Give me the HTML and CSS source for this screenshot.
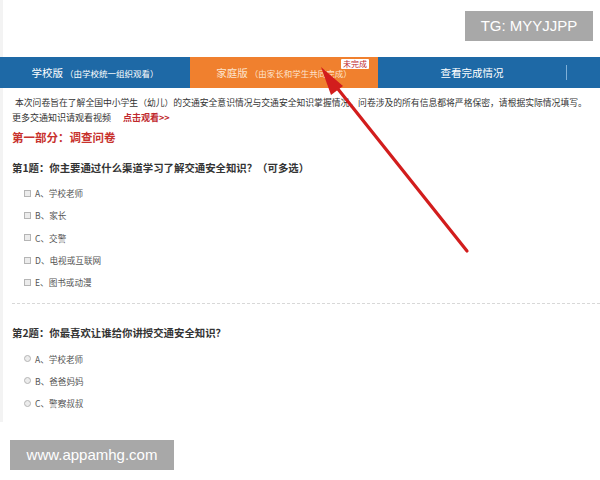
FILE: index.html
```html
<!DOCTYPE html>
<html lang="zh-CN">
<head>
    <meta charset="UTF-8">
    <meta name="viewport" content="width=device-width, initial-scale=1.0">
    <title>交通安全调查问卷</title>
    <link rel="stylesheet" href="styles.css">
</head>
<body>
    <div class="tg-mark">TG: MYYJJPP</div>

    <div class="page">
        <div class="tabs">
            <div class="tab">学校版 <small>（由学校统一组织观看）</small></div>
            <div class="tab active">家庭版 <small>（由家长和学生共同完成）</small><span class="badge">未完成</span></div>
            <div class="tab">查看完成情况</div>
            <div class="tab rest"></div>
        </div>

        <div class="content">
            <p class="intro">本次问卷旨在了解全国中小学生（幼儿）的交通安全意识情况与交通安全知识掌握情况，问卷涉及的所有信息都将严格保密，请根据实际情况填写。</p>
            <p class="more">更多交通知识请观看视频 <a href="#">点击观看&gt;&gt;</a></p>

            <h2>第一部分：调查问卷</h2>

            <div class="question">
                <h3>第1题：你主要通过什么渠道学习了解交通安全知识？（可多选）</h3>
                <ul class="options">
                    <li><span class="box"></span>A、学校老师</li>
                    <li><span class="box"></span>B、家长</li>
                    <li><span class="box"></span>C、交警</li>
                    <li><span class="box"></span>D、电视或互联网</li>
                    <li><span class="box"></span>E、图书或动漫</li>
                </ul>
            </div>

            <div class="question second">
                <h3>第2题：你最喜欢让谁给你讲授交通安全知识？</h3>
                <ul class="options">
                    <li><span class="box round"></span>A、学校老师</li>
                    <li><span class="box round"></span>B、爸爸妈妈</li>
                    <li><span class="box round"></span>C、警察叔叔</li>
                </ul>
            </div>
        </div>
    </div>

    <!-- red arrow drawn over the screenshot -->
    <svg class="arrow" width="600" height="480" viewBox="0 0 600 480">
        <line x1="467" y1="251" x2="330" y2="79" stroke="#d21d1d" stroke-width="3.2" stroke-linecap="round"/>
        <polygon points="321,67 343,86 331,95" fill="#d21d1d"/>
    </svg>

    <div class="site-mark">www.appamhg.com</div>
</body>
</html>
```

FILE: styles.css
```css
* {
    margin: 0;
    padding: 0;
    box-sizing: border-box;
}

body {
    font-family: "Noto Sans CJK SC", "Liberation Sans", sans-serif;
    background-color: #fff;
    color: #333;
    position: relative;
    width: 600px;
    height: 480px;
    overflow: hidden;
}

.page {
    padding-top: 57px;
    height: 422px;
    border-left: 3px solid #f3f3f3;
}

.tabs {
    display: flex;
    height: 31px;
    background-color: #1e69a6;
    margin-left: -3px;
}

.tab {
    position: relative;
    width: 188px;
    display: flex;
    align-items: center;
    justify-content: center;
    color: #fff;
    font-size: 10.5px;
    white-space: nowrap;
}

.tab:first-child {
    width: 190px;
}

.tab small {
    font-size: 8.5px;
    margin-left: 2px;
}

.tab.active {
    background-color: #f0802e;
    color: #fde3cc;
}

.tab.rest {
    flex: 1;
    width: auto;
    border-left: 1px solid #7fb0d8;
    margin: 8px 0;
}

.badge {
    position: absolute;
    top: 2px;
    right: 9px;
    background-color: #fff;
    color: #c0282d;
    font-size: 8px;
    line-height: 10px;
    padding: 0 2px;
    border-radius: 1px;
}

.content {
    padding: 7px 0 0 9px;
}

.intro {
    font-size: 8.8px;
    line-height: 15px;
    text-indent: 3px;
    color: #333;
    white-space: nowrap;
}

.more {
    font-size: 9px;
    line-height: 15px;
    color: #333;
}

.more a {
    color: #c0282d;
    text-decoration: none;
    font-weight: bold;
    margin-left: 10px;
}

h2 {
    margin-top: 3px;
    font-size: 11.5px;
    line-height: 18px;
    color: #c8322d;
}

.question h3 {
    margin-top: 14px;
    font-size: 10.4px;
    line-height: 16px;
    color: #333;
}

.options {
    list-style: none;
    padding: 6px 0 0 12px;
}

.options li {
    display: flex;
    align-items: center;
    height: 22.3px;
    font-size: 8.6px;
    color: #555;
}

.box {
    width: 7px;
    height: 7px;
    border: 1px solid #b5b5b5;
    background-color: #ececec;
    margin-right: 4px;
}

.box.round {
    border-radius: 50%;
}

.second {
    margin-top: 10px;
    padding-top: 11px;
    border-top: 1px dashed #d8d8d8;
}

.second h3 {
    margin-top: 10px;
}

.arrow {
    position: absolute;
    top: 0;
    left: 0;
}

.tg-mark {
    position: absolute;
    top: 11px;
    left: 465px;
    width: 128px;
    height: 30px;
    background-color: #a8a8a8;
    color: #fff;
    font-family: "Liberation Sans", Arial, sans-serif;
    font-size: 15px;
    line-height: 30px;
    text-align: center;
}

.site-mark {
    position: absolute;
    top: 440px;
    left: 10px;
    width: 164px;
    height: 30px;
    background-color: #a8a8a8;
    color: #fff;
    font-family: "Liberation Sans", Arial, sans-serif;
    font-size: 15px;
    line-height: 30px;
    text-align: center;
}
```
